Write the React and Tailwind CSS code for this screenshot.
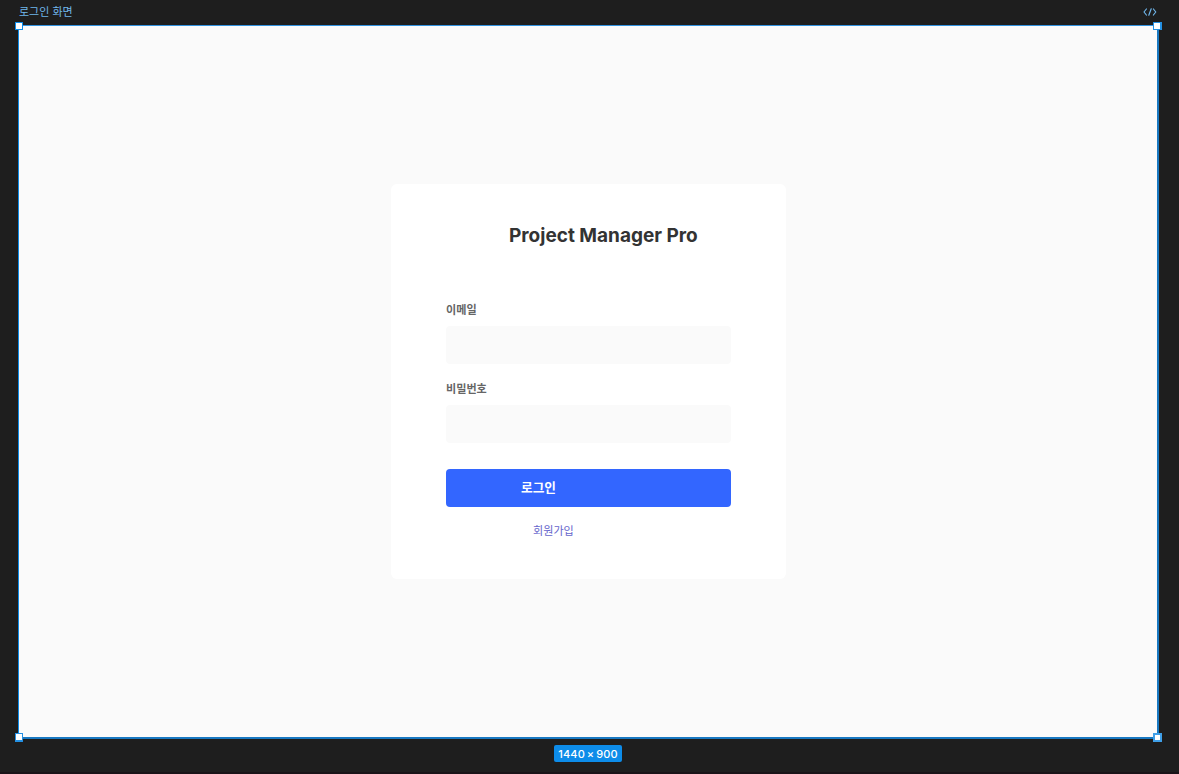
import React, { useState } from 'react';

const handles = [
  '-left-[4px] -top-[4px] size-[8px] border border-[#0d8ce9]',
  '-right-[5px] -top-[4px] w-[9px] h-[8px] border border-r-2 border-[#2490e2]',
  '-left-[4px] -bottom-[5px] w-[8px] h-[9px] border border-b-2 border-[#2490e2]',
  '-right-[5px] -bottom-[5px] size-[9px] border-2 border-[#3f9fe8]',
];

const fontClass = "font-['Inter','Noto_Sans_CJK_KR',sans-serif]";

function Field({ label, type, value, onChange }) {
  return (
    <label className="block h-[79px]">
      <span className="block h-[22px] text-[11.1px] leading-[13px] font-bold text-[#666666]">{label}</span>
      <input
        type={type}
        value={value}
        onChange={onChange}
        className="block w-full h-[38px] px-3 rounded bg-[#fafafa] text-sm text-[#333333] outline-none"
      />
    </label>
  );
}

export default function App() {
  const [email, setEmail] = useState('');
  const [password, setPassword] = useState('');

  return (
    <div className={`w-full h-screen overflow-hidden bg-[#1e1e1e] flex flex-col border-b-2 border-[#1a1318] ${fontClass}`}>

      {/* Frame title */}
      <div className="h-[25px] shrink-0 flex items-center justify-between pl-[19px] pr-[22px] pb-[2px] text-[#70b6ea]">
        <span className="text-[11px] leading-4">로그인 화면</span>
        <svg className="w-[14px] h-[8px]" viewBox="0 0 14 8" fill="none" stroke="currentColor" strokeWidth="1.2" strokeLinecap="round" strokeLinejoin="round">
          <path d="M3.4 1 L1 4 L3.4 7 M10.4 1 L12.8 4 L10.4 7 M8.2 0.8 L5.8 7.2" />
        </svg>
      </div>

      {/* Selected frame */}
      <div className="relative ml-[18px] w-[1141px] h-[714px] shrink-0 bg-[#fafafa] border border-r-2 border-b-2 border-t-[#3192e0] border-l-[#0d8ce9] border-r-[#1878c1] border-b-[#1878c1] pl-[372px] pt-[158px]">
        {handles.map((pos) => (
          <span key={pos} className={`absolute bg-white ${pos}`} />
        ))}

        {/* Login card */}
        <div className="w-[395px] h-[395px] rounded-md bg-white px-[55px] pt-[40px]">
          <h1 className="h-[80px] pl-[63px] text-[19px] leading-6 font-bold text-[#333333] whitespace-nowrap">Project Manager Pro</h1>
          <Field label="이메일" type="email" value={email} onChange={(e) => setEmail(e.target.value)} />
          <Field label="비밀번호" type="password" value={password} onChange={(e) => setPassword(e.target.value)} />
          <button className="mt-[7px] w-full h-[38px] pl-[75px] rounded bg-[#3366ff] text-left text-[12.7px] leading-none font-bold text-white">로그인</button>
          <a href="#signup" className="block mt-[16px] pl-[87px] text-[11.1px] leading-4 text-[#6666cc]">회원가입</a>
        </div>
      </div>

      {/* Size badge */}
      <div className="mt-[6px] ml-[554px] w-[68px] h-[17px] shrink-0 rounded-xs bg-[#0d8ce9] text-center text-[11px] leading-[18px] font-medium text-white whitespace-nowrap tracking-[0.15px] [word-spacing:-1.2px]">
        1440 × 900
      </div>
    </div>
  );
}
